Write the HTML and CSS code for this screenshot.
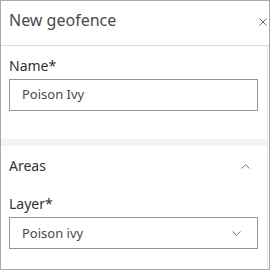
FILE: index.html
```html
<!DOCTYPE html>
<html lang="en">
<head>
  <meta charset="UTF-8" />
  <title>New geofence</title>
  <link rel="stylesheet" href="styles.css">
</head>
<body>
  <div class="panel">
    <div class="panel-header">
      <h2 class="panel-title">New geofence</h2>
      <button class="close-btn" aria-label="Close">
        <svg width="8" height="8" viewBox="0 0 8 8"><path d="M0.5 0.5L7.5 7.5M7.5 0.5L0.5 7.5" stroke="#6a6a6a" stroke-width="1" fill="none"/></svg>
      </button>
    </div>

    <div class="panel-content">
      <div class="block">
        <label class="field-label">Name*</label>
        <div class="input">Poison Ivy</div>
      </div>

      <div class="divider"></div>

      <div class="block">
        <div class="block-header">
          <span class="block-title">Areas</span>
          <svg width="9" height="5" viewBox="0 0 9 5"><path d="M0.5 4.5L4.5 0.8L8.5 4.5" stroke="#7a7a7a" stroke-width="1" fill="none"/></svg>
        </div>
        <label class="field-label">Layer*</label>
        <div class="input select">
          <span>Poison ivy</span>
          <svg width="9" height="5" viewBox="0 0 9 5"><path d="M0.5 0.5L4.5 4.2L8.5 0.5" stroke="#7a7a7a" stroke-width="1" fill="none"/></svg>
        </div>
      </div>
    </div>
  </div>
</body>
</html>
```

FILE: styles.css
```css
body { margin: 0; font-family: "Noto Sans", sans-serif; color: #323232; }
.panel { width: 268px; height: 268px; border: 1px solid #a9a9a9; background: #fff; overflow: hidden; }
.panel-header { display: flex; align-items: flex-start; justify-content: space-between; height: 35px; border-bottom: 1px solid #dcdcdc; padding: 9px 2px 0 8px; }
.panel-title { margin: 0; font-size: 16px; line-height: 20px; font-weight: 400; color: #4a4a4a; }
.close-btn { background: none; border: 0; padding: 0; margin-top: 8px; display: flex; }
.panel-content { width: 266px; height: 222px; border-right: 1px solid #e8e8e8; }
.block { padding: 11px 9px 0 8px; }
.field-label { display: block; font-size: 14px; line-height: 18px; margin-bottom: 4px; }
.input { height: 30px; border: 1px solid #959595; padding: 0 12px; font-size: 13px; line-height: 28px; color: #4a4a4a; }
.select { display: flex; align-items: center; justify-content: space-between; padding-right: 16px; }
.divider { height: 7px; margin-top: 28px; background: #f3f3f3; }
.block-header { display: flex; align-items: center; justify-content: space-between; padding-right: 8px; margin-bottom: 20px; line-height: 18px; }
.block-title { font-size: 14px; }
```
